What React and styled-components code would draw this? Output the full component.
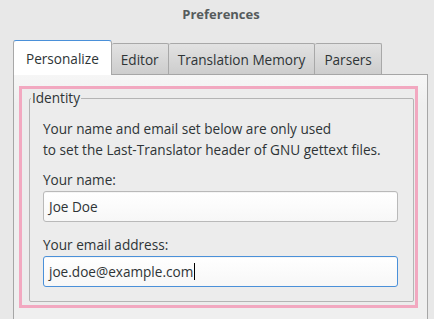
import React from "react";
import styled, { createGlobalStyle } from "styled-components";

const GlobalStyle = createGlobalStyle`
    html, body {
        margin: 0;
        padding: 0;
        background: #e8e8e8;
        overflow: hidden;
    }
    body {
        font-family: "Open Sans", "Noto Sans", sans-serif;
        color: #2e3436;
    }
`;

const Window = styled.div`
    width: 434px;
    height: 319px;
    display: flex;
    flex-direction: column;
    background: #e8e8e8;
    overflow: hidden;
`;

const TitleBar = styled.div`
    height: 27px;
    display: flex;
    align-items: center;
    justify-content: center;
    padding-left: 8px;
    font-size: 13px;
    font-weight: 700;
    color: #555b5c;
`;

const Notebook = styled.div`
    margin: 13px 6px 0 13px;
    display: flex;
    flex-direction: column;
    flex: 1;
`;

const TabRow = styled.div`
    display: flex;
    align-items: flex-end;
    position: relative;
    z-index: 1;
`;

const Tab = styled.div`
    box-sizing: border-box;
    height: ${(p) => (p.$active ? "35px" : "31px")};
    padding: 0 ${(p) => (p.$active ? "12px" : "9px")};
    display: flex;
    align-items: center;
    font-size: 13.6px;
    color: #2e3436;
    border: 1px solid #a8a8a8;
    border-bottom: none;
    border-left: ${(p) => (p.$first ? "1px solid #a8a8a8" : "none")};
    border-radius: ${(p) => (p.$active ? "3px 3px 0 0" : "2px 2px 0 0")};
    background: ${(p) =>
        p.$active
            ? "#ffffff"
            : "linear-gradient(to bottom, #e2e2e2, #cdcdcd)"};
    ${(p) => p.$active && "border-top: 1px solid #4a90d9; margin-bottom: -1px;"}
`;

const Pane = styled.div`
    flex: 1;
    border: 1px solid #a6a6a6;
    border-bottom: none;
    background: linear-gradient(to bottom, #f6f6f6, #efefef 30px);
    padding: 11px 9px 0 5px;
`;

const Highlight = styled.div`
    border: 3px solid #f2a8c0;
    background: #ececec;
    padding: 0 1px 3px 7px;
`;

const Frame = styled.fieldset`
    margin: 0;
    padding: 0;
    border: 1px solid #b4b4b4;
    border-radius: 2px;
    min-width: 0;
`;

const FrameTitle = styled.legend`
    margin-left: 1px;
    padding: 0 1px;
    font-size: 13.6px;
    line-height: 18px;
    color: #2e3436;
`;

const FrameBody = styled.div`
    padding: 0 15px 14px 13px;
    display: flex;
    flex-direction: column;
`;

const Intro = styled.p`
    margin: 11px 0 0;
    font-size: 13.6px;
    line-height: 21px;
`;

const FieldLabel = styled.div`
    margin-top: ${(p) => p.$gap}px;
    font-size: 13.6px;
    line-height: 20px;
`;

const Entry = styled.div`
    box-sizing: border-box;
    margin-top: 1px;
    height: 31px;
    display: flex;
    align-items: center;
    padding: 0 5px;
    font-size: 13.6px;
    border: 1px solid ${(p) => (p.$focused ? "#4a90d9" : "#b9b9b9")};
    border-radius: 3px;
    background: linear-gradient(to bottom, #ffffff, #f7f7f7);
    box-shadow: inset 0 1px 0 rgba(0, 0, 0, 0.04);
`;

const Caret = styled.span`
    display: inline-block;
    width: 1px;
    height: 17px;
    margin-left: 1px;
    background: #000;
`;

export default function App() {
    return (
        <Window>
            <GlobalStyle />
            <TitleBar>Preferences</TitleBar>
            <Notebook>
                <TabRow>
                    <Tab $active $first>Personalize</Tab>
                    <Tab>Editor</Tab>
                    <Tab>Translation Memory</Tab>
                    <Tab>Parsers</Tab>
                </TabRow>
                <Pane>
                    <Highlight>
                        <Frame>
                            <FrameTitle>Identity</FrameTitle>
                            <FrameBody>
                                <Intro>
                                    Your name and email set below are only used
                                    <br />
                                    to set the Last-Translator header of GNU gettext files.
                                </Intro>
                                <FieldLabel $gap={10}>Your name:</FieldLabel>
                                <Entry>Joe Doe</Entry>
                                <FieldLabel $gap={13}>Your email address:</FieldLabel>
                                <Entry $focused>
                                    joe.doe@example.com
                                    <Caret />
                                </Entry>
                            </FrameBody>
                        </Frame>
                    </Highlight>
                </Pane>
            </Notebook>
        </Window>
    );
}
